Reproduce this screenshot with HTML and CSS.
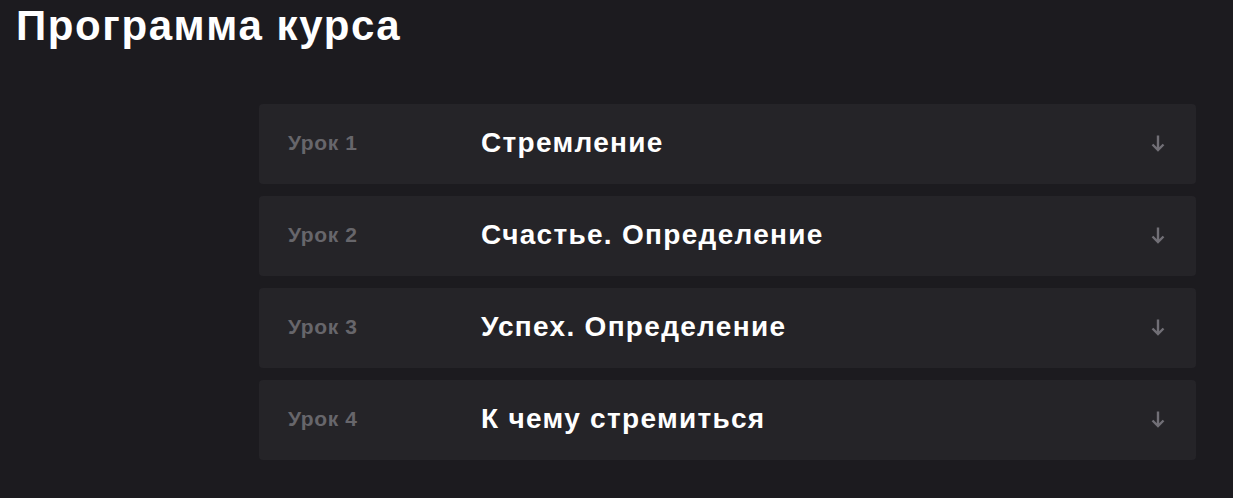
FILE: index.html
```html
<!DOCTYPE html>
<html lang="ru">
<head>
    <meta charset="UTF-8">
    <meta name="viewport" content="width=device-width, initial-scale=1.0">
    <title>Программа курса</title>
    <link rel="stylesheet" href="styles.css">
</head>
<body>
    <h1 class="page-title">Программа курса</h1>

    <div class="lessons">
        <div class="lesson">
            <span class="lesson-num">Урок 1</span>
            <span class="lesson-name">Стремление</span>
            <svg class="lesson-arrow" viewBox="0 0 14 18"><path d="M7 1.5v14.5M1.5 10.5l5.5 5.5 5.5-5.5"/></svg>
        </div>
        <div class="lesson">
            <span class="lesson-num">Урок 2</span>
            <span class="lesson-name">Счастье. Определение</span>
            <svg class="lesson-arrow" viewBox="0 0 14 18"><path d="M7 1.5v14.5M1.5 10.5l5.5 5.5 5.5-5.5"/></svg>
        </div>
        <div class="lesson">
            <span class="lesson-num">Урок 3</span>
            <span class="lesson-name">Успех. Определение</span>
            <svg class="lesson-arrow" viewBox="0 0 14 18"><path d="M7 1.5v14.5M1.5 10.5l5.5 5.5 5.5-5.5"/></svg>
        </div>
        <div class="lesson">
            <span class="lesson-num">Урок 4</span>
            <span class="lesson-name">К чему стремиться</span>
            <svg class="lesson-arrow" viewBox="0 0 14 18"><path d="M7 1.5v14.5M1.5 10.5l5.5 5.5 5.5-5.5"/></svg>
        </div>
    </div>
</body>
</html>
```

FILE: styles.css
```css
body {
    margin: 0;
    background: #1c1b1f;
    font-family: "Liberation Sans", Arial, sans-serif;
    color: #ffffff;
}

.page-title {
    margin: 0;
    padding: 3px 0 0 16px;
    font-size: 42px;
    line-height: 46px;
    font-weight: bold;
    letter-spacing: 1.6px;
}

.lessons {
    margin: 55px 37px 0 259px;
    display: flex;
    flex-direction: column;
    gap: 12px;
}

.lesson {
    height: 80px;
    background: #252428;
    border-radius: 4px;
    display: flex;
    align-items: center;
    padding: 0 31px 2px 29px;
    box-sizing: border-box;
}

.lesson-num {
    width: 193px;
    flex-shrink: 0;
    font-size: 21px;
    font-weight: bold;
    letter-spacing: 0.6px;
    color: #67666b;
}

.lesson-name {
    flex: 1;
    font-size: 28px;
    font-weight: bold;
    letter-spacing: 1.3px;
    color: #ffffff;
}

.lesson-arrow {
    width: 14px;
    height: 18px;
    fill: none;
    stroke: #716f76;
    stroke-width: 2.4;
}
```
